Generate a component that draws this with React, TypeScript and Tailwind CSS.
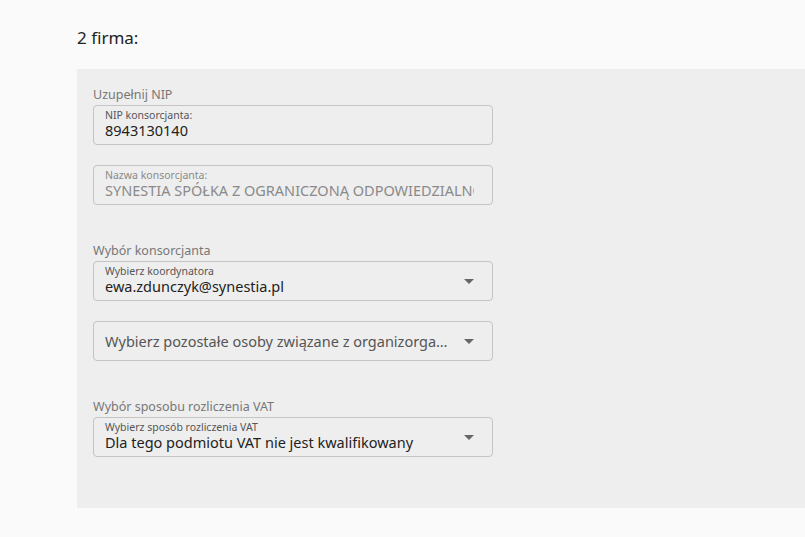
import React from 'react';

const font = { fontFamily: '"Noto Sans", "Open Sans", sans-serif' };

const Arrow: React.FC = () => (
  <svg className="w-[10px] h-[5px] text-[#666]" viewBox="0 0 10 5">
    <path d="M0 0 L10 0 L5 5 Z" fill="currentColor" />
  </svg>
);

const Field: React.FC<{ label?: string; value: string; disabled?: boolean; select?: boolean; placeholder?: boolean }> = ({
  label,
  value,
  disabled,
  select,
  placeholder,
}) => (
  <div className="w-[400px] h-[40px] border border-[#c4c4c4] rounded-[4px] flex items-center pl-[11px] pr-[18px]">
    <div className="flex-1 min-w-0 flex flex-col">
      {label && (
        <span className={`text-[10.5px] leading-[11px] ${disabled ? 'text-[#8a8a8a]' : 'text-[#555]'}`}>{label}</span>
      )}
      <span
        className={`text-[14.5px] leading-[19px] whitespace-nowrap overflow-hidden ${
          placeholder ? 'text-ellipsis text-[#555]' : disabled ? 'text-[#8a8a8a]' : 'text-[#222]'
        }`}
      >
        {value}
      </span>
    </div>
    {select && (
      <div className="ml-[12px] shrink-0 flex items-center">
        <Arrow />
      </div>
    )}
  </div>
);

const Section: React.FC<{ title: string; children: React.ReactNode }> = ({ title, children }) => (
  <div className="flex flex-col">
    <div className="text-[12.5px] leading-[16px] text-[#777] mb-[2px]">{title}</div>
    <div className="flex flex-col gap-[20px]">{children}</div>
  </div>
);

const App: React.FC = () => {
  return (
    <div className="w-[805px] h-[537px] bg-[#fafafa] overflow-hidden" style={font}>
      <div className="pl-[77px] pt-[27px]">
        <h2 className="text-[17px] leading-[22px] text-[#222] mb-[20px]">2 firma:</h2>
        <div className="bg-[#eeeeee] h-[439px] pl-[16px] pt-[18px] flex flex-col gap-[38px]">
          <Section title="Uzupełnij NIP">
            <Field label="NIP konsorcjanta:" value="8943130140" />
            <Field label="Nazwa konsorcjanta:" value="SYNESTIA SPÓŁKA Z OGRANICZONĄ ODPOWIEDZIALNOŚCIĄ" disabled />
          </Section>
          <Section title="Wybór konsorcjanta">
            <Field label="Wybierz koordynatora" value="ewa.zdunczyk@synestia.pl" select />
            <Field value="Wybierz pozostałe osoby związane z organizorganizacją" select placeholder />
          </Section>
          <Section title="Wybór sposobu rozliczenia VAT">
            <Field label="Wybierz sposób rozliczenia VAT" value="Dla tego podmiotu VAT nie jest kwalifikowany" select />
          </Section>
        </div>
      </div>
    </div>
  );
};

export default App;
